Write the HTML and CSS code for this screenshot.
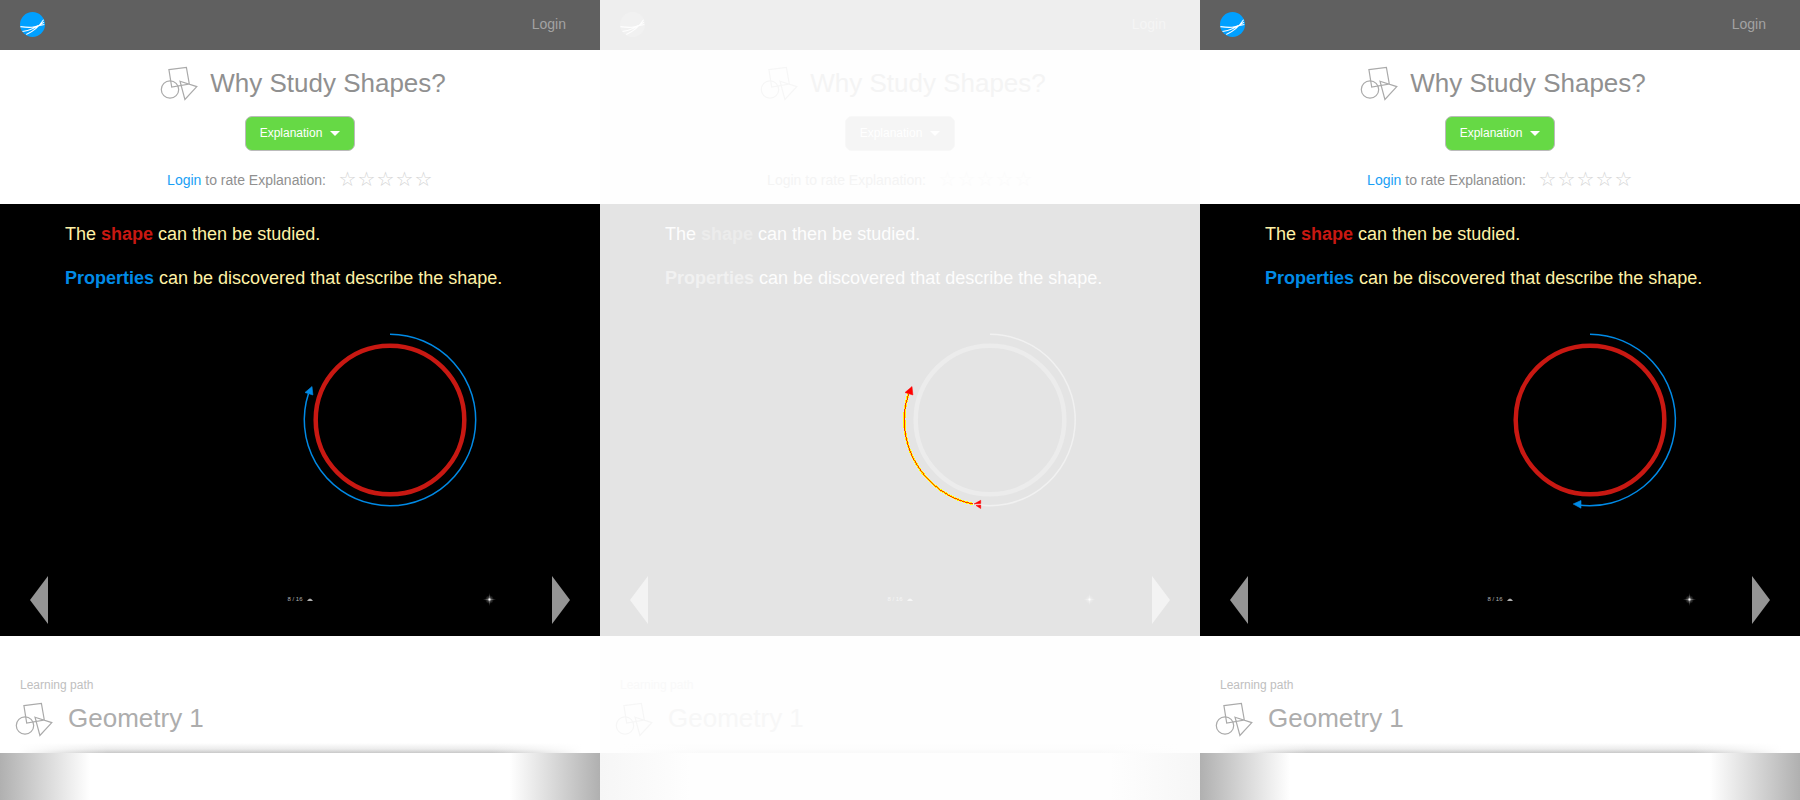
FILE: index.html
```
<!DOCTYPE html>
<html lang="en">
<head>
<meta charset="utf-8">
<title>Why Study Shapes?</title>
<link rel="stylesheet" href="styles.css">
</head>
<body>
<svg class="defs" aria-hidden="true">
  <defs>
    <symbol id="logo" viewBox="0 0 26 26">
      <circle class="logo-disc" cx="13" cy="13" r="13"/>
      <path class="logo-line" d="M.4 15.200Q14 17.200 19 14M2.600 20.300Q13 19 25 10.500M6.500 23.500Q18 18 24.500 8M16 16Q20 13.500 25.300 13"/>
    </symbol>
    <symbol id="shapes" viewBox="0 0 38 36">
      <path class="shapes-line" d="M8.900 3.600 26.400 1.400 29.300 18 11.700 21zM20 15.200 36.800 20.600 24.900 33.500z"/>
      <circle class="shapes-line" cx="10" cy="23.500" r="8.700"/>
    </symbol>
    <symbol id="prev" viewBox="0 0 18 48"><path d="M18 0V48L0 24z"/></symbol>
    <symbol id="next" viewBox="0 0 18 48"><path d="M0 0V48L18 24z"/></symbol>
    <radialGradient id="glow">
      <stop offset="0" stop-color="#fff" stop-opacity=".8"/>
      <stop offset=".4" stop-color="#fff" stop-opacity=".25"/>
      <stop offset="1" stop-color="#fff" stop-opacity="0"/>
    </radialGradient>
    <symbol id="spark" viewBox="0 0 14 14">
      <circle cx="7.500" cy="7.500" r="4.500" fill="url(#glow)"/>
      <path d="M7.500 1 8.300 6.700 14 7.500 8.300 8.300 7.500 14 6.700 8.300 1 7.500 6.700 6.700z" fill="#fff" fill-opacity=".25"/>
      <circle cx="7.500" cy="7.500" r="1" fill="#fff" fill-opacity=".7"/>
    </symbol>
  </defs>
</svg>
<div class="panels">
  <main class="panel">
    <header class="topbar"><a href="#" aria-label="Home"><svg class="logo"><use href="#logo"/></svg></a><a class="login" href="#">Login</a></header>
    <section class="intro">
      <h1 class="title"><svg class="shapes"><use href="#shapes"/></svg>Why Study Shapes?</h1>
      <button class="version" type="button">Explanation <svg class="caret" viewBox="0 0 10 5"><path d="M0 0H10L5 5z"/></svg></button>
      <div class="rating"><p><a href="#">Login</a> to rate Explanation:</p><div class="stars"><span>☆</span><span>☆</span><span>☆</span><span>☆</span><span>☆</span></div></div>
    </section>
    <section class="slide">
      <p>The <b class="word-shape">shape</b> can then be studied.</p>
      <p><b class="word-prop">Properties</b> can be discovered that describe the shape.</p>
      <svg class="figure" viewBox="0 0 180 180">
        <circle class="ring" cx="90" cy="90" r="74.300"/>
        <path class="arc" d="M90 4.300A85.700 85.700 0 1 1 8.500 63.500"/>
        <path class="tip" d="M12 56.500 12.900 65 5 62.500z"/>
      </svg>
      <nav class="controls"><button type="button" aria-label="Previous"><svg class="arrow"><use href="#prev"/></svg></button><button class="page" type="button">8 / 16 <svg class="up" viewBox="0 0 6 3"><path d="M0 3H6Q3-2 0 3z"/></svg></button><button class="sparkle" type="button" aria-label="Pointer"><svg class="spark"><use href="#spark"/></svg></button><button type="button" aria-label="Next"><svg class="arrow"><use href="#next"/></svg></button></nav>
    </section>
    <section class="path"><p>Learning path</p><h2 class="title"><svg class="shapes"><use href="#shapes"/></svg>Geometry 1</h2></section>
    <div class="shelf"></div>
  </main>
  <div class="panel diff">
    <header class="topbar"><a href="#" aria-label="Home"><svg class="logo"><use href="#logo"/></svg></a><a class="login" href="#">Login</a></header>
    <section class="intro">
      <h1 class="title"><svg class="shapes"><use href="#shapes"/></svg>Why Study Shapes?</h1>
      <button class="version" type="button">Explanation <svg class="caret" viewBox="0 0 10 5"><path d="M0 0H10L5 5z"/></svg></button>
      <div class="rating"><p><a href="#">Login</a> to rate Explanation:</p><div class="stars"><span>☆</span><span>☆</span><span>☆</span><span>☆</span><span>☆</span></div></div>
    </section>
    <section class="slide">
      <p>The <b class="word-shape">shape</b> can then be studied.</p>
      <p><b class="word-prop">Properties</b> can be discovered that describe the shape.</p>
      <svg class="figure" viewBox="0 0 180 180">
        <circle class="ring" cx="90" cy="90" r="74.300"/>
        <path class="arc" d="M90 4.300A85.700 85.700 0 1 1 73 174.100"/>
        <path class="change-edge" d="M73 174.100A85.700 85.700 0 0 1 8.500 63.500"/>
        <path class="change-core" d="M73 174.100A85.700 85.700 0 0 1 8.500 63.500"/>
        <path class="change-tip" d="M12 56.500 12.900 65 5 62.500zM74 174 80.700 170.300V173.500zM76 175.500 80.700 175V178.500z"/>
      </svg>
      <nav class="controls"><button type="button" aria-label="Previous"><svg class="arrow"><use href="#prev"/></svg></button><button class="page" type="button">8 / 16 <svg class="up" viewBox="0 0 6 3"><path d="M0 3H6Q3-2 0 3z"/></svg></button><button class="sparkle" type="button" aria-label="Pointer"><svg class="spark"><use href="#spark"/></svg></button><button type="button" aria-label="Next"><svg class="arrow"><use href="#next"/></svg></button></nav>
    </section>
    <section class="path"><p>Learning path</p><h2 class="title"><svg class="shapes"><use href="#shapes"/></svg>Geometry 1</h2></section>
    <div class="shelf"></div>
  </div>
  <div class="panel">
    <header class="topbar"><a href="#" aria-label="Home"><svg class="logo"><use href="#logo"/></svg></a><a class="login" href="#">Login</a></header>
    <section class="intro">
      <h1 class="title"><svg class="shapes"><use href="#shapes"/></svg>Why Study Shapes?</h1>
      <button class="version" type="button">Explanation <svg class="caret" viewBox="0 0 10 5"><path d="M0 0H10L5 5z"/></svg></button>
      <div class="rating"><p><a href="#">Login</a> to rate Explanation:</p><div class="stars"><span>☆</span><span>☆</span><span>☆</span><span>☆</span><span>☆</span></div></div>
    </section>
    <section class="slide">
      <p>The <b class="word-shape">shape</b> can then be studied.</p>
      <p><b class="word-prop">Properties</b> can be discovered that describe the shape.</p>
      <svg class="figure" viewBox="0 0 180 180">
        <circle class="ring" cx="90" cy="90" r="74.300"/>
        <path class="arc" d="M90 4.300A85.700 85.700 0 1 1 78 174.900"/>
        <path class="tip" d="M73.200 174 81 170.500V178.200z"/>
      </svg>
      <nav class="controls"><button type="button" aria-label="Previous"><svg class="arrow"><use href="#prev"/></svg></button><button class="page" type="button">8 / 16 <svg class="up" viewBox="0 0 6 3"><path d="M0 3H6Q3-2 0 3z"/></svg></button><button class="sparkle" type="button" aria-label="Pointer"><svg class="spark"><use href="#spark"/></svg></button><button type="button" aria-label="Next"><svg class="arrow"><use href="#next"/></svg></button></nav>
    </section>
    <section class="path"><p>Learning path</p><h2 class="title"><svg class="shapes"><use href="#shapes"/></svg>Geometry 1</h2></section>
    <div class="shelf"></div>
  </div>
</div>
</body>
</html>
```
FILE: styles.css
```
* { box-sizing: border-box; }
body { margin: 0; font: 14px/20px "Liberation Sans", Arial, sans-serif; }
p, h1, h2 { margin: 0; font-weight: 400; }
a { text-decoration: none; }
svg { display: block; }
button { border: 0; padding: 0; background: none; font-family: inherit; }
.defs { position: absolute; width: 0; height: 0; }

.panels { display: grid; grid-template-columns: repeat(3, 1fr); min-height: 100vh; }
.panel {
  --page: #fff;
  --page-clear: rgba(255, 255, 255, 0);
  --bar: #606060;
  --bar-text: #a3a3a3;
  --logo: #00a0ff;
  --logo-line: #fff;
  --title: #909090;
  --title-soft: #adadad;
  --caption: #c0c0c0;
  --icon: #aaa;
  --button: #66d945;
  --button-edge: #bbb;
  --link: #1a9ff5;
  --text: #909090;
  --star: #d4d4d4;
  --slide: #000;
  --slide-text: #fff2a6;
  --ring: #c81812;
  --arc: #008ae6;
  --nav: #949494;
  --page-text: #b0b0b0;
  --shade: 176, 176, 176;
  --edge: 200, 200, 200;
  display: flex;
  flex-direction: column;
  min-width: 0;
  background: var(--page);
}
.diff {
  --page: #fefefe;
  --page-clear: rgba(254, 254, 254, 0);
  --bar: #eee;
  --bar-text: #f5f5f5;
  --logo: #f1f1f1;
  --logo-line: #fefefe;
  --title: #f4f4f4;
  --title-soft: #f7f7f7;
  --caption: #f9f9f9;
  --icon: #f6f6f6;
  --button: #f5f5f5;
  --button-edge: #f8f8f8;
  --link: #f4f4f4;
  --text: #f4f4f4;
  --star: #fbfbfb;
  --slide: #e4e4e4;
  --slide-text: #fdfdfd;
  --ring: #ececec;
  --arc: #f1f1f1;
  --nav: #f3f3f3;
  --page-text: #f6f6f6;
  --shade: 246, 246, 246;
  --edge: 249, 249, 249;
}

.topbar { display: flex; align-items: center; justify-content: space-between; height: 50px; padding: 0 34px 2px 20px; background: var(--bar); }
.logo { width: 25px; height: 25px; }
.logo-disc { fill: var(--logo); }
.logo-line { fill: none; stroke: var(--logo-line); stroke-width: 1.1; }
.login { color: var(--bar-text); }

.intro { display: flex; flex-direction: column; align-items: center; padding: 16px 0 14px; }
.title { display: flex; align-items: flex-start; gap: 12px; padding-left: 6px; font-size: 26px; line-height: 34px; color: var(--title); }
.shapes { width: 38px; height: 36px; }
.shapes-line { fill: none; stroke: var(--icon); stroke-width: 1.2; }
.version { display: flex; align-items: center; gap: 8px; margin-top: 14px; padding: 8px 14px 9px; border: 1px solid var(--button-edge); border-radius: 7px; background: var(--button); color: #fff; font-size: 12px; line-height: 16px; }
.caret { width: 10px; height: 5px; fill: #fff; }
.rating { display: flex; gap: 12px; align-items: flex-start; margin-top: 19px; color: var(--text); }
.rating a { color: var(--link); }
.stars { display: flex; color: var(--star); font: 20px/18px "DejaVu Sans", sans-serif; }
.stars span { width: 19px; text-align: center; }

.slide { display: flex; flex-direction: column; padding: 20px 30px 12px; background: var(--slide); color: var(--slide-text); font-size: 18px; }
.slide p { margin: 0 35px 24px; }
.word-shape { color: var(--ring); }
.word-prop { color: var(--arc); }
.figure { width: 180px; height: 180px; margin: 18px 0 66px 50%; }
.ring { fill: none; stroke: var(--ring); stroke-width: 4.5; }
.arc { fill: none; stroke: var(--arc); stroke-width: 1.5; }
.tip { fill: var(--arc); stroke: var(--arc); stroke-width: .6; }
.change-edge { fill: none; stroke: #ff0; stroke-width: 2.4; shape-rendering: crispEdges; }
.change-core { fill: none; stroke: #f00; stroke-width: .8; shape-rendering: crispEdges; }
.change-tip { fill: #f00; stroke: #f00; stroke-width: .5; }
.controls { display: grid; grid-template-columns: 18px 1fr auto 1fr 18px; align-items: center; }
.controls button:last-child { grid-column: 5; }
.arrow { width: 18px; height: 48px; fill: var(--nav); }
.page { grid-column: 3; display: flex; align-items: center; gap: 4px; padding-bottom: 2px; color: var(--page-text); font-size: 6px; line-height: 8px; }
.up { width: 6px; height: 3px; fill: var(--page-text); }
.sparkle { justify-self: end; margin-right: 56px; padding-bottom: 2px; }
.spark { width: 14px; height: 14px; }

.path {
  padding: 39px 10px 15px;
  background:
    linear-gradient(to right, var(--page) 3%, var(--page-clear) 18%, var(--page-clear) 82%, var(--page) 97%),
    linear-gradient(to top, rgb(var(--edge)), rgba(var(--edge), .35) 4px, rgba(var(--edge), 0) 10px);
}
.path p { padding-left: 10px; font-size: 12px; color: var(--caption); }
.path .title { gap: 15px; margin-top: 7px; padding-left: 5px; line-height: 32px; color: var(--title-soft); }
.shelf { flex: 1; min-height: 47px; background: linear-gradient(to right, rgb(var(--shade)), rgba(var(--shade), 0) 15%, rgba(var(--shade), 0) 85%, rgb(var(--shade))); }
```
